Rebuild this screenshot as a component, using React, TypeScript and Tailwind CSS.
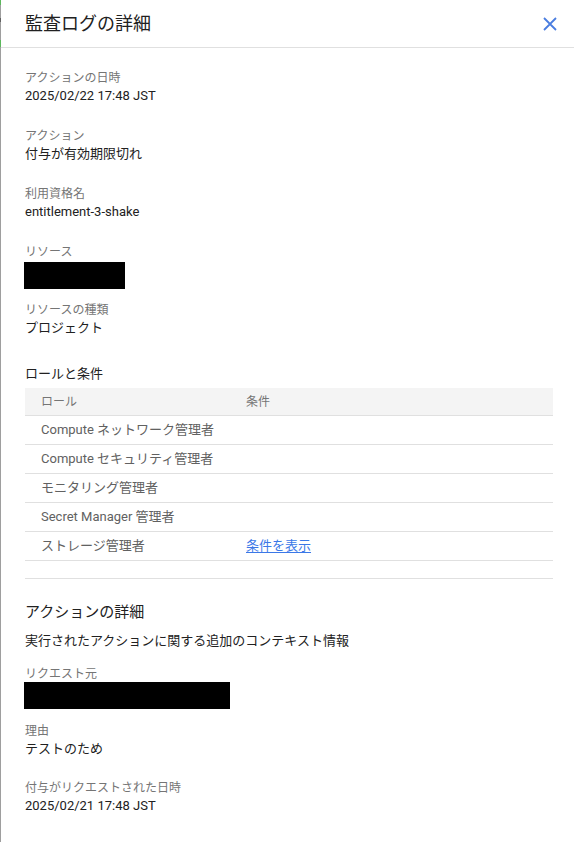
import React from "react";

const font = { fontFamily: 'Roboto, "Noto Sans CJK JP", sans-serif' };

function Label({ children, className = "" }: { children: React.ReactNode; className?: string }) {
  return <div className={`text-[12px] leading-4 text-[#757575] ${className}`}>{children}</div>;
}
function Value({ children, className = "" }: { children: React.ReactNode; className?: string }) {
  return <div className={`text-[13px] leading-5 text-[#212121] ${className}`}>{children}</div>;
}

const roles: { role: string; link?: boolean }[] = [
  { role: "Compute ネットワーク管理者" },
  { role: "Compute セキュリティ管理者" },
  { role: "モニタリング管理者" },
  { role: "Secret Manager 管理者" },
  { role: "ストレージ管理者", link: true },
];

export default function App() {
  return (
    <div className="flex w-[574px] h-[842px] bg-white overflow-hidden" style={font}>
      <div className="flex flex-col w-[1px] shrink-0 bg-[#9e9e9e]">
        <div className="h-[5px] bg-[#5cb85c]" />
        <div className="h-[13px]" />
        <div className="h-[4px] bg-[#616161]" />
        <div className="h-[18px]" />
        <div className="h-[7px] bg-[#5cb85c]" />
      </div>
      <div className="flex-1 flex flex-col">
        <div className="h-[48px] flex items-center justify-between pl-[24px] pr-[16px] border-b border-[#e0e0e0]">
          <div className="text-[18px] text-[#212121] leading-6 pt-[1px]">監査ログの詳細</div>
          <svg width="16" height="16" viewBox="0 0 16 16">
            <path d="M2 2 L14 14 M14 2 L2 14" stroke="#4a7de0" strokeWidth="1.8" fill="none" />
          </svg>
        </div>
        <div className="pl-[24px] pr-[21px] flex flex-col">
          <Label className="mt-[22px]">アクションの日時</Label>
          <Value>2025/02/22 17:48 JST</Value>

          <Label className="mt-[22px]">アクション</Label>
          <Value>付与が有効期限切れ</Value>

          <Label className="mt-[22px]">利用資格名</Label>
          <Value>entitlement-3-shake</Value>

          <Label className="mt-[22px]">リソース</Label>
          <div className="mt-[2px] -ml-[1px] h-[27px] w-[101px] bg-black" />

          <Label className="mt-[13px]">リソースの種類</Label>
          <Value>プロジェクト</Value>

          <div className="mt-[26px] text-[13px] leading-5 text-[#212121]">ロールと条件</div>

          <div className="mt-[4px] flex flex-col">
            <div className="flex h-[28px] items-center bg-[#f4f4f4] border-b border-[#e0e0e0] text-[12px] text-[#757575]">
              <div className="w-[205px] pl-[16px]">ロール</div>
              <div className="pl-[16px]">条件</div>
            </div>
            {roles.map((r) => (
              <div
                key={r.role}
                className="flex h-[29px] items-center border-b border-[#e0e0e0] text-[13px] text-[#616161]"
              >
                <div className="w-[205px] pl-[16px]">{r.role}</div>
                <div className="pl-[16px]">
                  {r.link ? (
                    <span className="text-[#3b78e7] underline underline-offset-2">条件を表示</span>
                  ) : null}
                </div>
              </div>
            ))}
          </div>

          <div className="mt-[17px] h-[1px] bg-[#e0e0e0]" />

          <div className="mt-[21px] text-[15px] leading-6 text-[#212121]">アクションの詳細</div>
          <Value className="mt-[7px]">実行されたアクションに関する追加のコンテキスト情報</Value>

          <Label className="mt-[15px]">リクエスト元</Label>
          <div className="mt-[0px] -ml-[1px] h-[27px] w-[206px] bg-black" />

          <Label className="mt-[14px]">理由</Label>
          <Value>テストのため</Value>

          <Label className="mt-[21px]">付与がリクエストされた日時</Label>
          <Value>2025/02/21 17:48 JST</Value>
        </div>
      </div>
    </div>
  );
}
